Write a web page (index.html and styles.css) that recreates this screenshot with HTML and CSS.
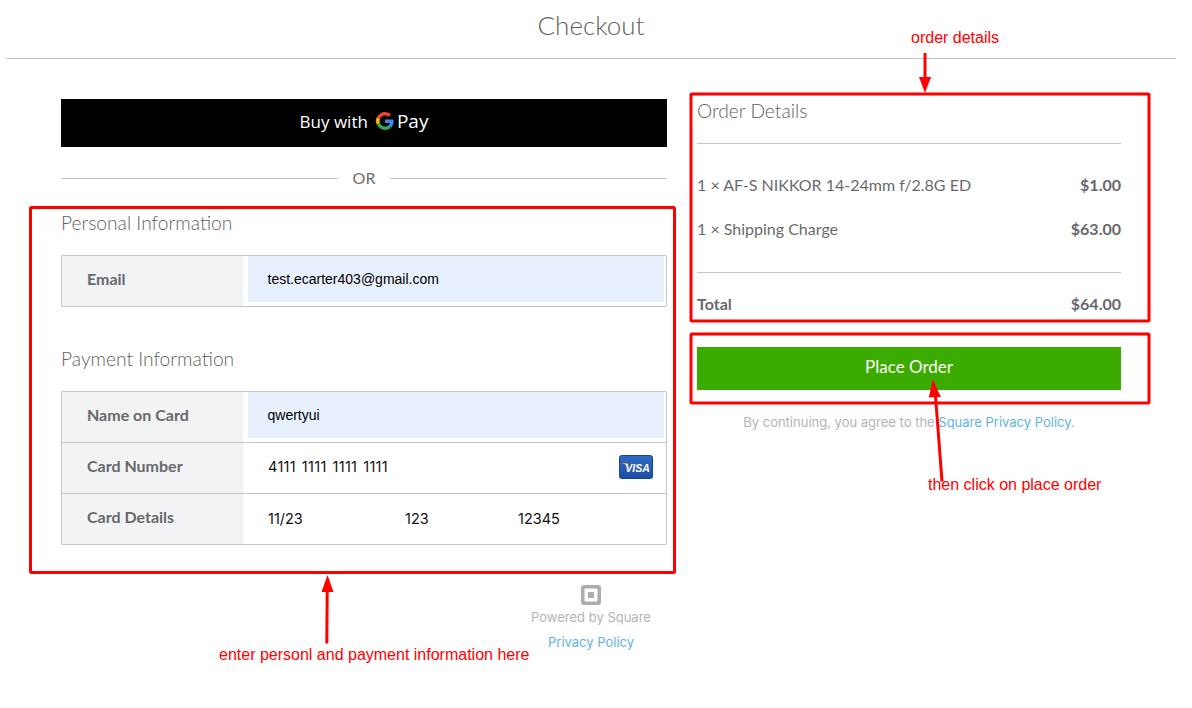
FILE: index.html
```html
<!DOCTYPE html>
<html lang="en">
<head>
    <meta charset="UTF-8">
    <meta name="viewport" content="width=device-width, initial-scale=1.0">
    <title>Checkout</title>
    <link rel="stylesheet" href="styles.css">
</head>
<body>
    <header class="page-header">
        <h1>Checkout</h1>
    </header>

    <main class="checkout">
        <section class="left-col">
            <button class="gpay">
                <span>Buy with</span>
                <svg class="g-logo" viewBox="0 0 48 48" width="18" height="18">
                    <path fill="#EA4335" d="M24 9.5c3.54 0 6.71 1.22 9.21 3.6l6.85-6.85C35.9 2.38 30.47 0 24 0 14.62 0 6.51 5.38 2.56 13.22l7.98 6.19C12.43 13.72 17.74 9.5 24 9.5z"/>
                    <path fill="#4285F4" d="M46.98 24.55c0-1.57-.15-3.09-.38-4.55H24v9.02h12.94c-.58 2.96-2.26 5.48-4.78 7.18l7.73 6c4.51-4.18 7.09-10.36 7.09-17.65z"/>
                    <path fill="#FBBC05" d="M10.53 28.59c-.48-1.45-.76-2.99-.76-4.59s.27-3.14.76-4.59l-7.98-6.19C.92 16.46 0 20.12 0 24c0 3.88.92 7.54 2.56 10.78l7.97-6.19z"/>
                    <path fill="#34A853" d="M24 48c6.48 0 11.93-2.13 15.89-5.81l-7.73-6c-2.15 1.45-4.92 2.3-8.16 2.3-6.26 0-11.57-4.22-13.47-9.91l-7.98 6.19C6.51 42.62 14.62 48 24 48z"/>
                </svg>
                <span class="pay">Pay</span>
            </button>

            <div class="or-row"><span>OR</span></div>

            <h2 class="personal-title">Personal Information</h2>
            <div class="field-table">
                <div class="field-row">
                    <label>Email</label>
                    <div class="field-value"><span class="autofill">test.ecarter403@gmail.com</span></div>
                </div>
            </div>

            <h2 class="payment-title">Payment Information</h2>
            <div class="field-table">
                <div class="field-row">
                    <label>Name on Card</label>
                    <div class="field-value"><span class="autofill">qwertyui</span></div>
                </div>
                <div class="field-row">
                    <label>Card Number</label>
                    <div class="field-value card-number">
                        <span class="card-text">4111 1111 1111 1111</span>
                        <svg class="visa" viewBox="0 0 34 24" width="34" height="24">
                            <defs>
                                <linearGradient id="visaBlue" x1="0" y1="0" x2="0" y2="1">
                                    <stop offset="0" stop-color="#2f6cc4"/>
                                    <stop offset="1" stop-color="#1c4da3"/>
                                </linearGradient>
                            </defs>
                            <rect x="0.5" y="0.5" width="33" height="23" rx="2" fill="url(#visaBlue)" stroke="#1a468f"/>
                            <path d="M3 8h5.5l1.5 6.5C8.800 11.500 6 9.200 3 8z" fill="#f2a92c"/>
                            <text class="visa-text" x="18.500" y="16.500" text-anchor="middle">VISA</text>
                        </svg>
                    </div>
                </div>
                <div class="field-row">
                    <label>Card Details</label>
                    <div class="field-value card-details">
                        <span class="exp">11/23</span>
                        <span class="cvv">123</span>
                        <span>12345</span>
                    </div>
                </div>
            </div>

            <div class="powered">
                <svg viewBox="0 0 20 20" width="20" height="20">
                    <path fill="#adadad" fill-rule="evenodd" d="M3 0h14a3 3 0 0 1 3 3v14a3 3 0 0 1-3 3H3a3 3 0 0 1-3-3V3a3 3 0 0 1 3-3zM4.500 3.500a1 1 0 0 0-1 1v11a1 1 0 0 0 1 1h11a1 1 0 0 0 1-1v-11a1 1 0 0 0-1-1z"/>
                    <rect x="7" y="7" width="6" height="6" rx="0.500" fill="#adadad"/>
                </svg>
                <span class="powered-text">Powered by Square</span>
                <a href="#">Privacy Policy</a>
            </div>
        </section>

        <section class="right-col">
            <h2 class="order-title">Order Details</h2>
            <div class="order-items">
                <div class="order-row"><span>1 × AF-S NIKKOR 14-24mm f/2.8G ED</span><b>$1.00</b></div>
                <div class="order-row"><span>1 × Shipping Charge</span><b>$63.00</b></div>
            </div>
            <div class="order-total"><b>Total</b><b>$64.00</b></div>
            <button class="place-order"><span>Place Order</span></button>
            <p class="terms">By continuing, you agree to the <a href="#">Square Privacy Policy</a>.</p>
        </section>
    </main>

    <!-- red notes drawn on top of the screenshot -->
    <svg class="notes" width="1192" height="708" viewBox="0 0 1192 708">
        <g fill="none" stroke="#f00" stroke-width="3">
            <rect x="30.500" y="207.500" width="644" height="365" rx="1"/>
            <rect x="691" y="94" width="458" height="227" rx="1"/>
            <rect x="691" y="334" width="458" height="69" rx="1"/>
            <path d="M925 53V78"/>
            <path d="M326.800 643.500L327.200 590"/>
            <path d="M942 481.500L935.500 396"/>
        </g>
        <g fill="#f00">
            <path d="M919 77H931L925 93z"/>
            <path d="M327.500 575L333.500 592H321.500z"/>
            <path d="M932.800 379L940.800 397L928.800 397.500z"/>
        </g>
        <g class="note-text">
            <text x="911" y="43">order details</text>
            <text x="928" y="490">then click on place order</text>
            <text x="219" y="660">enter personl and payment information here</text>
        </g>
    </svg>
</body>
</html>
```

FILE: styles.css
```css
* {
    box-sizing: border-box;
}

body {
    margin: 0;
    padding: 0 16px 0 6px;
    background-color: #fff;
    font-family: 'Lato', 'Open Sans', sans-serif;
    color: #6a6a6e;
}

.page-header {
    height: 59px;
    border-bottom: 1px solid #c6c7c9;
    text-align: center;
}

.page-header h1 {
    margin: 0;
    padding-top: 10px;
    font-size: 26px;
    line-height: 30px;
    font-weight: 300;
    color: #5f5f5f;
}

.checkout {
    display: grid;
    grid-template-columns: 606px 424px;
    column-gap: 30px;
    padding: 40px 0 0 55px;
}

.left-col,
.right-col {
    display: flex;
    flex-direction: column;
}

button {
    border: none;
    cursor: pointer;
    padding: 0;
}

.gpay {
    display: flex;
    justify-content: center;
    align-items: center;
    gap: 5px;
    height: 48px;
    padding-bottom: 4px;
    background-color: #000;
    color: #fff;
    font-family: 'Open Sans', sans-serif;
    font-size: 17px;
    font-weight: 500;
}

.g-logo {
    margin-left: 3px;
    margin-top: -1px;
}

.pay {
    margin-left: -2px;
    font-size: 19px;
    font-weight: 400;
}

.or-row {
    display: flex;
    align-items: center;
    gap: 15px;
    height: 22px;
    margin-top: 20px;
    font-size: 16px;
    color: #6e6e70;
}

.or-row span {
    margin-top: -2px;
}

.or-row::before,
.or-row::after {
    content: "";
    flex: 1;
    border-top: 1px solid #c6c7c9;
}

h2 {
    margin: 0;
    font-size: 19.2px;
    line-height: 24px;
    font-weight: 300;
    color: #5f5f63;
}

.personal-title {
    margin-top: 22px;
}

.payment-title {
    margin-top: 40px;
}

.field-table {
    margin-top: 20px;
    border: 1px solid #c6c7c9;
    border-bottom: none;
    border-radius: 2px;
}

.field-row {
    display: flex;
    height: 51px;
    border-bottom: 1px solid #c6c7c9;
}

.field-row label {
    width: 181px;
    padding: 13px 0 0 25px;
    background-color: #f2f3f5;
    font-size: 16px;
    line-height: 20px;
    font-weight: 700;
    color: #68686c;
}

.field-value {
    flex: 1;
    display: flex;
    align-items: center;
    padding-bottom: 2px;
    font-family: 'Inter', sans-serif;
    font-size: 14.5px;
    color: #111;
}

.autofill {
    display: block;
    flex: 1;
    height: 46px;
    margin: 0 2px 2px 5px;
    padding-left: 19.5px;
    background-color: #e8f0fe;
    font-family: 'Liberation Sans', Arial, sans-serif;
    font-size: 14px;
    line-height: 46px;
    color: #000;
}

.card-number {
    justify-content: space-between;
    padding: 0 13px 3px 25px;
}

.card-text {
    letter-spacing: 0.3px;
    word-spacing: 1.5px;
}

.card-details {
    padding-left: 25px;
}

.exp {
    width: 137px;
}

.cvv {
    width: 113px;
}

.visa {
    display: block;
}

.visa-text {
    font-family: 'Liberation Sans', sans-serif;
    font-size: 10.5px;
    font-weight: 700;
    font-style: italic;
    fill: #fff;
}

.powered {
    align-self: flex-end;
    display: flex;
    flex-direction: column;
    align-items: center;
    width: 152px;
    margin-top: 40px;
    font-family: 'Inter', sans-serif;
    font-size: 13px;
    color: #b4b4b6;
}

.powered-text {
    margin-top: 4px;
    line-height: 16px;
}

.powered a {
    margin-top: 9px;
    line-height: 16px;
}

a {
    color: #62b3e0;
    text-decoration: none;
}

.order-title {
    height: 44px;
}

.order-items {
    padding: 18px 0 22px;
    border-top: 1px solid #c6c7c9;
    border-bottom: 1px solid #c6c7c9;
}

.order-row,
.order-total {
    display: flex;
    justify-content: space-between;
    align-items: center;
    height: 44px;
    font-size: 16px;
}

.order-row b,
.order-total b {
    font-weight: 700;
    color: #68686c;
}

.order-total {
    height: 31px;
    margin-top: 15px;
}

.place-order {
    height: 43px;
    margin-top: 28px;
    padding-bottom: 4px;
    background-color: #3cab00;
    color: #fff;
    font-family: 'Lato', sans-serif;
    font-size: 17px;
}

.terms {
    margin: 24px 0 0;
    text-align: center;
    font-family: 'Inter', sans-serif;
    font-size: 13px;
    line-height: 16px;
    color: #b4b4b6;
}

.notes {
    position: absolute;
    top: 0;
    left: 0;
    pointer-events: none;
}

.note-text {
    fill: #f00;
    font-family: 'Liberation Sans', Arial, sans-serif;
    font-size: 16px;
}
```
